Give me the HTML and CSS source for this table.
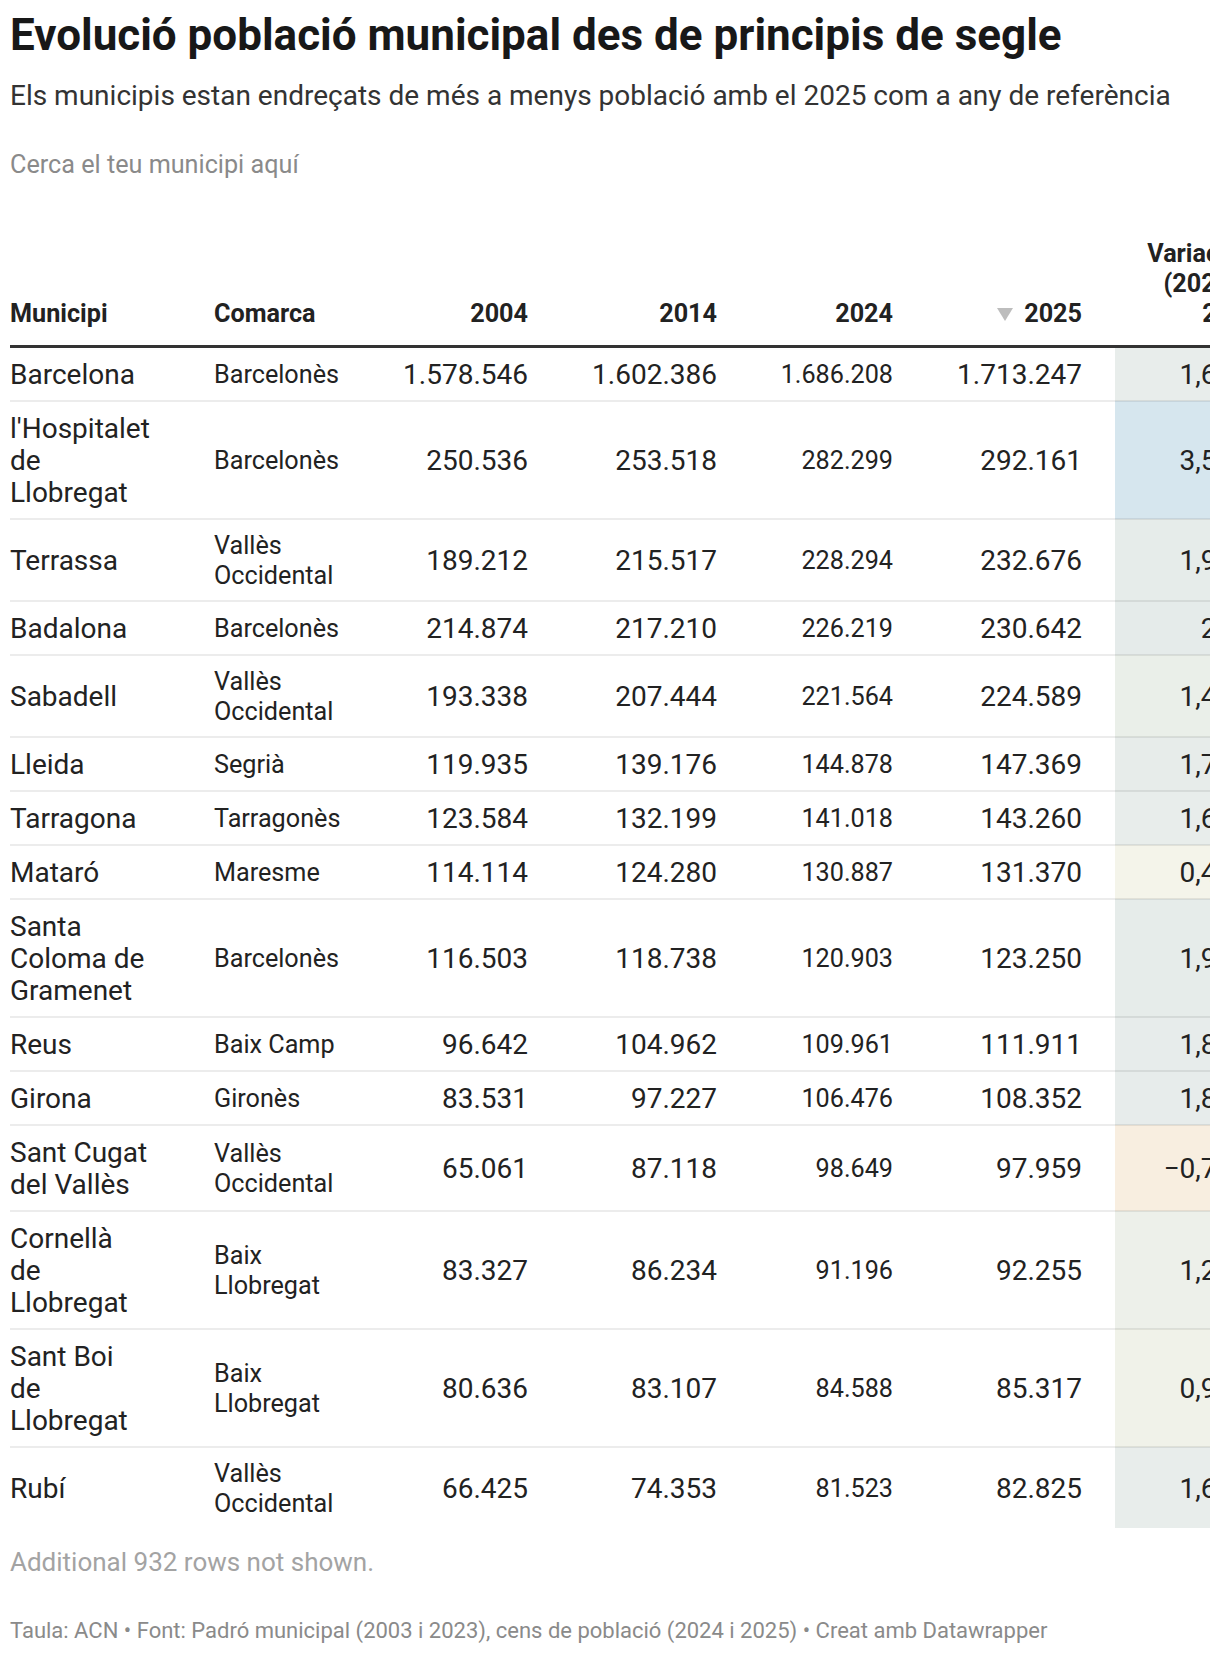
FILE: index.html
```html
<!DOCTYPE html>
<html lang="ca">
<head>
<meta charset="utf-8">
<title>Evolució població municipal</title>
<link rel="stylesheet" href="styles.css">
</head>
<body>
<div class="chart">
  <h1 class="title">Evolució població municipal des de principis de segle</h1>
  <p class="desc">Els municipis estan endreçats de més a menys població amb el 2025 com a any de referència</p>
  <div class="search"><input type="text" placeholder="Cerca el teu municipi aquí"></div>
  <div class="table-wrap">
    <table>
      <colgroup>
        <col class="c-mun"><col class="c-com"><col class="c-y1"><col class="c-y2"><col class="c-y3"><col class="c-y4"><col class="c-var">
      </colgroup>
      <thead>
        <tr>
          <th class="mun">Municipi</th>
          <th class="com">Comarca</th>
          <th class="n">2004</th>
          <th class="n">2014</th>
          <th class="n">2024</th>
          <th class="n y4"><span class="sort"><svg width="16" height="13" viewBox="0 0 16 13"><polygon points="0,0 16,0 8,13" fill="#bdbdbd"/></svg></span>2025</th>
          <th class="n var">Variació<br>(2024-<br>25)</th>
        </tr>
      </thead>
      <tbody>
        <tr><td class="mun">Barcelona</td><td class="com">Barcelonès</td><td class="n">1.578.546</td><td class="n">1.602.386</td><td class="n s">1.686.208</td><td class="n y4">1.713.247</td><td class="n var" style="background:#e8edeb">1,6%</td></tr>
        <tr><td class="mun">l'Hospitalet<br>de<br>Llobregat</td><td class="com">Barcelonès</td><td class="n">250.536</td><td class="n">253.518</td><td class="n s">282.299</td><td class="n y4">292.161</td><td class="n var" style="background:#d6e6ee">3,5%</td></tr>
        <tr><td class="mun">Terrassa</td><td class="com">Vallès Occidental</td><td class="n">189.212</td><td class="n">215.517</td><td class="n s">228.294</td><td class="n y4">232.676</td><td class="n var" style="background:#e6ecea">1,9%</td></tr>
        <tr><td class="mun">Badalona</td><td class="com">Barcelonès</td><td class="n">214.874</td><td class="n">217.210</td><td class="n s">226.219</td><td class="n y4">230.642</td><td class="n var" style="background:#e5ebea">2%</td></tr>
        <tr><td class="mun">Sabadell</td><td class="com">Vallès Occidental</td><td class="n">193.338</td><td class="n">207.444</td><td class="n s">221.564</td><td class="n y4">224.589</td><td class="n var" style="background:#eaefe9">1,4%</td></tr>
        <tr><td class="mun">Lleida</td><td class="com">Segrià</td><td class="n">119.935</td><td class="n">139.176</td><td class="n s">144.878</td><td class="n y4">147.369</td><td class="n var" style="background:#e7ecea">1,7%</td></tr>
        <tr><td class="mun">Tarragona</td><td class="com">Tarragonès</td><td class="n">123.584</td><td class="n">132.199</td><td class="n s">141.018</td><td class="n y4">143.260</td><td class="n var" style="background:#e8edeb">1,6%</td></tr>
        <tr><td class="mun">Mataró</td><td class="com">Maresme</td><td class="n">114.114</td><td class="n">124.280</td><td class="n s">130.887</td><td class="n y4">131.370</td><td class="n var" style="background:#f4f4ea">0,4%</td></tr>
        <tr><td class="mun">Santa<br>Coloma de<br>Gramenet</td><td class="com">Barcelonès</td><td class="n">116.503</td><td class="n">118.738</td><td class="n s">120.903</td><td class="n y4">123.250</td><td class="n var" style="background:#e6ecea">1,9%</td></tr>
        <tr><td class="mun">Reus</td><td class="com">Baix Camp</td><td class="n">96.642</td><td class="n">104.962</td><td class="n s">109.961</td><td class="n y4">111.911</td><td class="n var" style="background:#e7eceb">1,8%</td></tr>
        <tr><td class="mun">Girona</td><td class="com">Gironès</td><td class="n">83.531</td><td class="n">97.227</td><td class="n s">106.476</td><td class="n y4">108.352</td><td class="n var" style="background:#e7eceb">1,8%</td></tr>
        <tr><td class="mun">Sant Cugat<br>del Vallès</td><td class="com">Vallès Occidental</td><td class="n">65.061</td><td class="n">87.118</td><td class="n s">98.649</td><td class="n y4">97.959</td><td class="n var" style="background:#f8eee0">−0,7%</td></tr>
        <tr><td class="mun">Cornellà<br>de<br>Llobregat</td><td class="com">Baix Llobregat</td><td class="n">83.327</td><td class="n">86.234</td><td class="n s">91.196</td><td class="n y4">92.255</td><td class="n var" style="background:#edf0ea">1,2%</td></tr>
        <tr><td class="mun">Sant Boi<br>de<br>Llobregat</td><td class="com">Baix Llobregat</td><td class="n">80.636</td><td class="n">83.107</td><td class="n s">84.588</td><td class="n y4">85.317</td><td class="n var" style="background:#f0f2e9">0,9%</td></tr>
        <tr><td class="mun">Rubí</td><td class="com">Vallès Occidental</td><td class="n">66.425</td><td class="n">74.353</td><td class="n s">81.523</td><td class="n y4">82.825</td><td class="n var" style="background:#e8edeb">1,6%</td></tr>
      </tbody>
    </table>
  </div>
  <p class="more">Additional 932 rows not shown.</p>
  <p class="footer">Taula: ACN • Font: Padró municipal (2003 i 2023), cens de població (2024 i 2025) • Creat amb Datawrapper</p>
</div>
</body>
</html>
```

FILE: styles.css
```css
html, body {
  margin: 0;
  padding: 0;
  background: #ffffff;
}

body {
  font-family: Roboto, "Liberation Sans", Arial, sans-serif;
  color: #222222;
}

.chart {
  padding: 10px 10px 0 10px;
}

.title {
  margin: 0;
  font-size: 44px;
  font-weight: 700;
  line-height: 1.15;
  color: #181818;
}

.desc {
  margin: 19px 0 0 0;
  font-size: 28px;
  font-weight: 400;
  line-height: 1.15;
  color: #333333;
}

.search {
  margin-top: 38px;
}

.search input {
  display: block;
  width: 420px;
  height: 30px;
  margin: 0;
  padding: 0;
  border: 0;
  outline: 0;
  background: transparent;
  font-family: Roboto, "Liberation Sans", Arial, sans-serif;
  font-size: 25.2px;
  line-height: 30px;
  color: #333333;
}

.search input::placeholder {
  color: #8a8a8a;
  opacity: 1;
}

.table-wrap {
  width: 1200px;
  overflow: hidden;
  margin-top: 49px;
}

table {
  width: 1237px;
  table-layout: fixed;
  border-collapse: collapse;
}

.c-mun { width: 194px; }
.c-com { width: 176px; }
.c-y1 { width: 158px; }
.c-y2 { width: 189px; }
.c-y3 { width: 176px; }
.c-y4 { width: 212px; }
.c-var { width: 132px; }

th {
  font-size: 25.2px;
  font-weight: 700;
  line-height: 30px;
  color: #222222;
  vertical-align: bottom;
  padding: 10px 10px 16px 10px;
  border-bottom: 3px solid #333333;
  white-space: nowrap;
}

td {
  font-size: 28px;
  line-height: 32px;
  color: #222222;
  vertical-align: middle;
  padding: 11px 10px 9px 10px;
  border-bottom: 2px solid rgba(0, 0, 0, 0.075);
}

tbody tr:last-child td {
  border-bottom: 0;
}

th.mun, td.mun {
  text-align: left;
  padding-left: 0;
  padding-right: 44px;
}

th.com, td.com {
  text-align: left;
  padding-left: 10px;
  padding-right: 21px;
}

td.com {
  font-size: 25.2px;
  line-height: 30px;
}

.n {
  text-align: right;
}

td.s {
  font-size: 25.2px;
}

th.y4, td.y4 {
  padding-right: 33px;
}

.var {
  padding-left: 22px;
  padding-right: 10px;
}

th.var {
  padding-right: 7px;
}

.sort {
  display: inline-block;
  margin-right: 11px;
  vertical-align: 1px;
}

.sort svg {
  display: block;
}

.more {
  margin: 20px 0 0 0;
  font-size: 26px;
  line-height: 1.15;
  color: #a3a3a3;
}

.footer {
  margin: 40px 0 0 0;
  font-size: 22px;
  line-height: 1.15;
  color: #8a8a8a;
}
```
